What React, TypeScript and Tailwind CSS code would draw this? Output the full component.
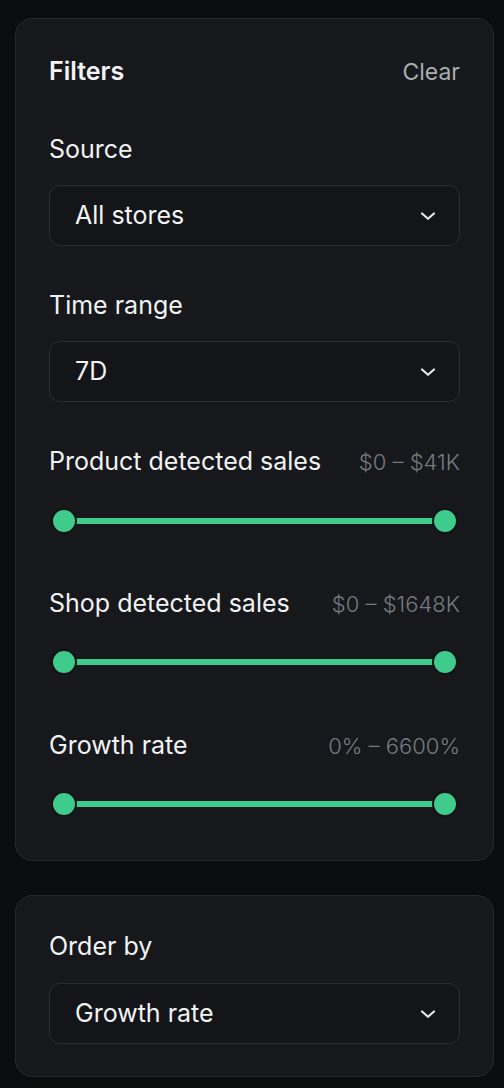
import React from "react";

const Chevron = () => (
  <svg width="16" height="16" viewBox="0 0 16 16" fill="none" className="shrink-0">
    <path d="M2 5.5 L8 10.8 L14 5.5" stroke="#e6e7e9" strokeWidth="2.2" strokeLinecap="round" strokeLinejoin="round" />
  </svg>
);

const Select = ({ value }: { value: string }) => (
  <div className="flex h-[61px] items-center justify-between rounded-[11px] border border-[#2a2d32] bg-[#131518] pl-[25px] pr-[23px]">
    <span className="text-[25px] text-[#f2f3f4]">{value}</span>
    <Chevron />
  </div>
);

const Slider = () => (
  <div className="relative h-[22px] mx-[4px]">
    <div className="absolute left-[11px] right-[11px] top-[8px] h-[6px] bg-[#3fcb8c]" />
    <div className="absolute left-[-2px] top-[-2px] h-[26px] w-[26px] rounded-full border-2 border-[#111315] bg-[#3fcb8c]" />
    <div className="absolute right-[-2px] top-[-2px] h-[26px] w-[26px] rounded-full border-2 border-[#111315] bg-[#3fcb8c]" />
  </div>
);

const RangeRow = ({ label, value }: { label: string; value: string }) => (
  <div className="flex h-[28px] items-center justify-between">
    <span className="text-[25px] text-[#f2f3f4]">{label}</span>
    <span className="text-[22px] font-light text-[#767a81]">{value}</span>
  </div>
);

export default function App() {
  return (
    <div
      className="h-[1088px] w-full overflow-hidden bg-[#0b0c0e] pl-[15px] pr-[10px] pt-[18px]"
      style={{ fontFamily: "Inter, 'Noto Sans', sans-serif" }}
    >
      <div className="rounded-[17px] border border-[#25282c] bg-[#16181b] pl-[33px] pr-[33px] pt-[35px] pb-[45px]">
        <div className="flex h-[36px] items-center justify-between">
          <span className="text-[25px] font-semibold text-[#f4f5f6]">Filters</span>
          <span className="text-[23px] text-[#a9acb1]">Clear</span>
        </div>

        <div className="mt-[46px] flex h-[28px] items-center text-[25px] text-[#f2f3f4]">Source</div>
        <div className="mt-[21px]">
          <Select value="All stores" />
        </div>

        <div className="mt-[46px] flex h-[28px] items-center text-[25px] text-[#f2f3f4]">Time range</div>
        <div className="mt-[21px]">
          <Select value="7D" />
        </div>

        <div className="mt-[46px]">
          <RangeRow label="Product detected sales" value="$0 – $41K" />
        </div>
        <div className="mt-[34px]">
          <Slider />
        </div>

        <div className="mt-[58px]">
          <RangeRow label="Shop detected sales" value="$0 – $1648K" />
        </div>
        <div className="mt-[33px]">
          <Slider />
        </div>

        <div className="mt-[59px]">
          <RangeRow label="Growth rate" value="0% – 6600%" />
        </div>
        <div className="mt-[33px]">
          <Slider />
        </div>
      </div>

      <div className="mt-[34px] rounded-[17px] border border-[#25282c] bg-[#16181b] px-[33px] pt-[37px] pb-[32px]">
        <div className="flex h-[28px] items-center text-[25px] text-[#f2f3f4]">Order by</div>
        <div className="mt-[22px]">
          <Select value="Growth rate" />
        </div>
      </div>
    </div>
  );
}
